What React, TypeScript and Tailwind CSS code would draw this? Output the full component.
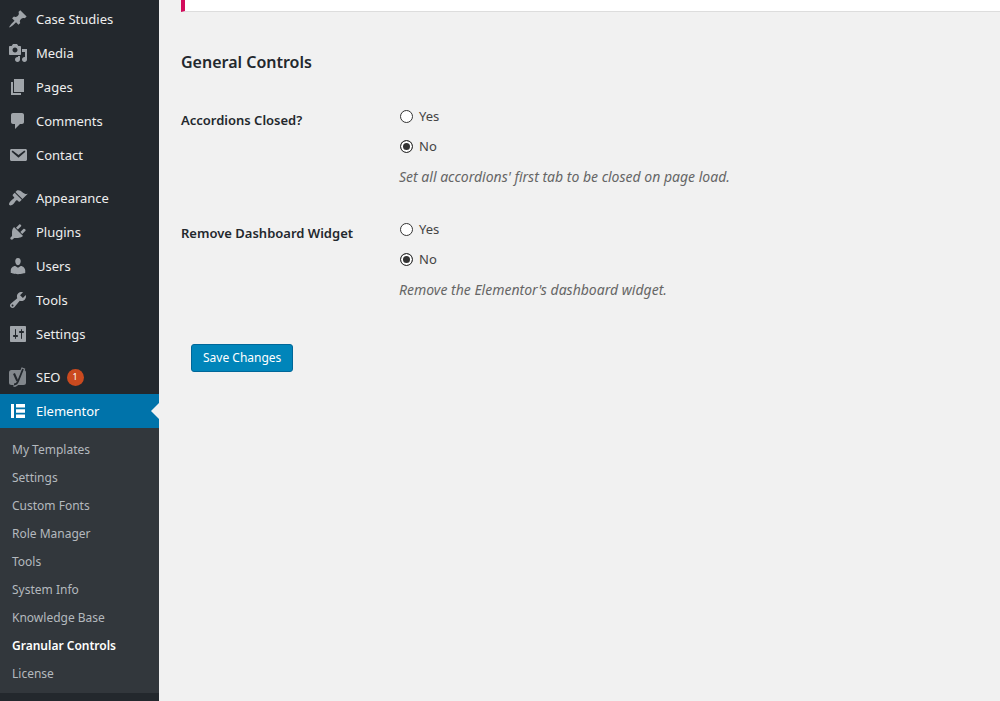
import React from "react";

interface MenuItem {
  label: string;
  icon: React.ReactNode;
  count?: number;
  active?: boolean;
}

interface RadioSetting {
  name: string;
  title: string;
  description: string;
}

const paths = {
  pin: "M10.44 3.02l1.82-1.82 6.36 6.35-1.83 1.82c-1.05-.68-2.48-.57-3.41.36l-.75.75c-.92.93-1.04 2.35-.35 3.41l-1.83 1.82-2.41-2.41-2.8 2.79c-.42.42-3.38 2.71-3.8 2.29s1.86-3.39 2.28-3.81l2.79-2.79L4.1 9.36l1.83-1.82c1.05.69 2.48.57 3.4-.36l.75-.75c.93-.92 1.05-2.35.36-3.41z",
  media:
    "M13 11V4c0-.55-.45-1-1-1h-1.67L9 1H5L3.67 3H2c-.55 0-1 .45-1 1v7c0 .55.45 1 1 1h10c.55 0 1-.45 1-1zM7 4.5c1.38 0 2.5 1.12 2.5 2.5S8.38 9.5 7 9.5 4.5 8.38 4.5 7 5.62 4.5 7 4.5zM14 6h5v10.5c0 1.38-1.12 2.5-2.5 2.5S14 17.88 14 16.5s1.12-2.5 2.5-2.5c.17 0 .34.02.5.05V9h-3V6zm-4 8.05V13h2v3.5c0 1.38-1.12 2.5-2.5 2.5S7 17.88 7 16.5 8.12 14 9.5 14c.17 0 .34.02.5.05z",
  page: "M6 15V2h10v13H6zm-1 1h8v2H3V5h2v11z",
  comment:
    "M5 2h9c1.1 0 2 .9 2 2v7c0 1.1-.9 2-2 2h-2l-5 5v-5H5c-1.1 0-2-.9-2-2V4c0-1.1.9-2 2-2z",
  email:
    "M3.5 4h14c.83 0 1.5.67 1.5 1.5v9c0 .83-.67 1.5-1.5 1.5h-14c-.83 0-1.5-.67-1.5-1.5v-9C2 4.67 2.67 4 3.5 4zM4.6 5.6L3.6 6.7l6.9 6 6.9-6-1-1.1-5.9 4.3z",
  brush:
    "M14.48 11.06L7.41 3.99l1.5-1.5c.5-.56 2.3-.47 3.51.32 1.21.8 1.43 1.28 2.91 2.1 1.18.64 2.45 1.26 4.45.85zm-.71.71L6.7 4.7 4.93 6.47c-.39.39-.39 1.02 0 1.41l1.06 1.06c.39.39.39 1.03 0 1.42-.6.6-1.43 1.11-2.21 1.69-.35.26-.7.53-1.01.84C1.43 14.23.4 16.08 1.4 17.07c.99 1 2.84-.03 4.18-1.36.31-.31.58-.66.85-1.02.57-.78 1.08-1.61 1.69-2.21.39-.39 1.02-.39 1.41 0l1.06 1.06c.39.39 1.02.39 1.41 0z",
  plug: "M13.11 4.36L9.87 7.6 8 5.73l3.24-3.24c.35-.34 1.05-.2 1.56.32.52.51.66 1.21.31 1.55zm-8 1.77l.91-1.12 9.01 9.01-1.19.84c-.71.71-2.63 1.16-3.82 1.16H6.14L4.9 17.26c-.59.59-1.54.59-2.12 0-.59-.58-.59-1.53 0-2.12l1.24-1.24v-3.88c0-1.13.4-3.19 1.09-3.89zm7.26 3.97l3.24-3.24c.34-.35 1.04-.21 1.55.31.52.51.66 1.21.31 1.55l-3.24 3.25z",
  user: "M10 9.25c-2.27 0-2.73-3.44-2.73-3.44C7 4.02 7.82 2 9.97 2c2.16 0 2.98 2.02 2.71 3.81 0 0-.41 3.44-2.68 3.44zm0 2.57L12.72 10c2.39 0 4.52 2.33 4.52 4.53v2.49s-3.65 1.13-7.24 1.13c-3.65 0-7.24-1.13-7.24-1.13v-2.49c0-2.25 1.94-4.48 4.47-4.48z",
  wrench:
    "M16.68 9.77c-1.34 1.34-3.3 1.67-4.95.99l-5.41 6.52c-.99.99-2.59.99-3.58 0s-.99-2.59 0-3.57l6.52-5.42c-.68-1.65-.35-3.61.99-4.95 1.28-1.28 3.12-1.62 4.72-1.06l-2.89 2.89 2.82 2.82 2.86-2.87c.53 1.58.18 3.39-1.08 4.65zM3.81 16.21c.4.39 1.04.39 1.43 0 .4-.4.4-1.04 0-1.43-.39-.4-1.03-.4-1.43 0-.39.39-.39 1.03 0 1.43z",
  sliders:
    "M18 17V3c0-.55-.45-1-1-1H3c-.55 0-1 .45-1 1v14c0 .55.45 1 1 1h14c.55 0 1-.45 1-1zM8 11h1c.55 0 1 .45 1 1s-.45 1-1 1H8v1.5c0 .28-.22.5-.5.5s-.5-.22-.5-.5V13H6c-.55 0-1-.45-1-1s.45-1 1-1h1V5.5c0-.28.22-.5.5-.5s.5.22.5.5V11zm5-2h-1c-.55 0-1-.45-1-1s.45-1 1-1h1V5.5c0-.28.22-.5.5-.5s.5.22.5.5V7h1c.55 0 1 .45 1 1s-.45 1-1 1h-1v5.5c0 .28-.22.5-.5.5s-.5-.22-.5-.5V9z",
  elementor: "M3 3h3v14H3zM8 3h9v3.500H8zM8 8.300h9v3.400H8zM8 13.500h9V17H8z",
};

function Icon({ d }: { d: string }) {
  return (
    <svg viewBox="0 0 20 20" className="h-5 w-5" fill="currentColor" fillRule="evenodd" aria-hidden="true">
      <path d={d} />
    </svg>
  );
}

function YoastIcon() {
  return (
    <svg viewBox="0 0 20 20" className="h-5 w-5" fill="none" aria-hidden="true">
      <rect x="1" y="3" width="17" height="15" rx="2.5" fill="#82878c" />
      {/* grey rim around the dark stroke */}
      <path d="M15.5 1L10 14.500c-.8 2-1.900 3.500-4.500 3.500" stroke="#82878c" strokeWidth="4" />
      <path d="M15 2L10 14.500c-.8 2-1.900 3-4 3" stroke="#23282d" strokeWidth="1.800" />
      <path d="M6 6.500l3.300 7.500" stroke="#23282d" strokeWidth="2" />
    </svg>
  );
}

const menuGroups: MenuItem[][] = [
  [
    { label: "Case Studies", icon: <Icon d={paths.pin} /> },
    { label: "Media", icon: <Icon d={paths.media} /> },
    { label: "Pages", icon: <Icon d={paths.page} /> },
    { label: "Comments", icon: <Icon d={paths.comment} /> },
    { label: "Contact", icon: <Icon d={paths.email} /> },
  ],
  [
    { label: "Appearance", icon: <Icon d={paths.brush} /> },
    { label: "Plugins", icon: <Icon d={paths.plug} /> },
    { label: "Users", icon: <Icon d={paths.user} /> },
    { label: "Tools", icon: <Icon d={paths.wrench} /> },
    { label: "Settings", icon: <Icon d={paths.sliders} /> },
  ],
  [
    { label: "SEO", icon: <YoastIcon />, count: 1 },
    { label: "Elementor", icon: <Icon d={paths.elementor} />, active: true },
  ],
];

const submenu = [
  "My Templates",
  "Settings",
  "Custom Fonts",
  "Role Manager",
  "Tools",
  "System Info",
  "Knowledge Base",
  "Granular Controls",
  "License",
];

const settings: RadioSetting[] = [
  {
    name: "accordions",
    title: "Accordions Closed?",
    description: "Set all accordions' first tab to be closed on page load.",
  },
  {
    name: "dashboard",
    title: "Remove Dashboard Widget",
    description: "Remove the Elementor's dashboard widget.",
  },
];

function Sidebar() {
  return (
    <nav className="w-[159px] shrink-0 bg-[#23282d] pt-0.5">
      <div className="flex flex-col gap-[9px]">
        {menuGroups.map((group, i) => (
          <ul key={i}>
            {group.map((item) => (
              <li key={item.label}>
                <a
                  href="#"
                  className={`relative flex h-[34px] items-center gap-1.5 pl-2 text-[13px] ${
                    item.active ? "bg-[#0073aa] text-white" : "text-[#eee] hover:text-[#00b9eb]"
                  }`}
                >
                  <span className={item.active ? "mr-0.5 text-white" : "mr-0.5 text-[#a0a5aa]"}>{item.icon}</span>
                  <span className="pt-0.5">{item.label}</span>
                  {item.count && (
                    <span className="flex h-[17px] w-[17px] items-center justify-center rounded-full bg-[#ca4a1f] text-[9px] text-white">
                      {item.count}
                    </span>
                  )}
                  {item.active && (
                    <span className="absolute right-0 border-y-8 border-r-8 border-y-transparent border-r-[#f1f1f1]" />
                  )}
                </a>
              </li>
            ))}
          </ul>
        ))}
      </div>
      <ul className="bg-[#32373c] pt-2 pb-[5px]">
        {submenu.map((label) => (
          <li key={label}>
            <a
              href="#"
              className={`flex h-7 items-center pl-3 text-[12px] ${
                label === "Granular Controls" ? "font-semibold text-white" : "text-[#b4b9be] hover:text-[#00b9eb]"
              }`}
            >
              {label}
            </a>
          </li>
        ))}
      </ul>
    </nav>
  );
}

function RadioRow({ setting }: { setting: RadioSetting }) {
  return (
    <fieldset className="flex">
      <legend className="float-left w-[218px] shrink-0 pt-1 text-[13px] leading-5 font-semibold text-[#23282d]">
        {setting.title}
      </legend>
      <div>
        {["Yes", "No"].map((option) => (
          <label key={option} className="mb-[10px] flex items-center gap-1.5 pl-px text-[13px] leading-5 text-[#444]">
            <input
              type="radio"
              name={setting.name}
              value={option}
              defaultChecked={option === "No"}
              className="h-[13px] w-[13px] appearance-none rounded-full border border-[#333] bg-white checked:border-[#333] checked:bg-[#333] checked:shadow-[inset_0_0_0_2px_white]"
            />
            {option}
          </label>
        ))}
        <p className="text-[14px] leading-[22px] text-[#666] italic">{setting.description}</p>
      </div>
    </fieldset>
  );
}

export default function App() {
  return (
    <div className="flex min-h-screen bg-[#f1f1f1] font-['Noto_Sans',sans-serif]">
      <Sidebar />
      <main className="min-w-0 flex-1 pl-[22px]">
        <div className="h-3 border-b border-l-4 border-b-[#ddd] border-l-[#d30c5c] bg-white" />
        <form onSubmit={(e) => e.preventDefault()}>
          <h2 className="mt-[38px] text-[16px] leading-6 font-semibold text-[#23282d]">General Controls</h2>
          <div className="mt-8 flex flex-col gap-[31px]">
            {settings.map((setting) => (
              <RadioRow key={setting.name} setting={setting} />
            ))}
          </div>
          <button
            type="submit"
            className="mt-[43px] ml-[10px] h-7 rounded-[3px] border border-[#006799] bg-[#0085ba] px-[11px] text-[12px] text-white"
          >
            Save Changes
          </button>
        </form>
      </main>
    </div>
  );
}
